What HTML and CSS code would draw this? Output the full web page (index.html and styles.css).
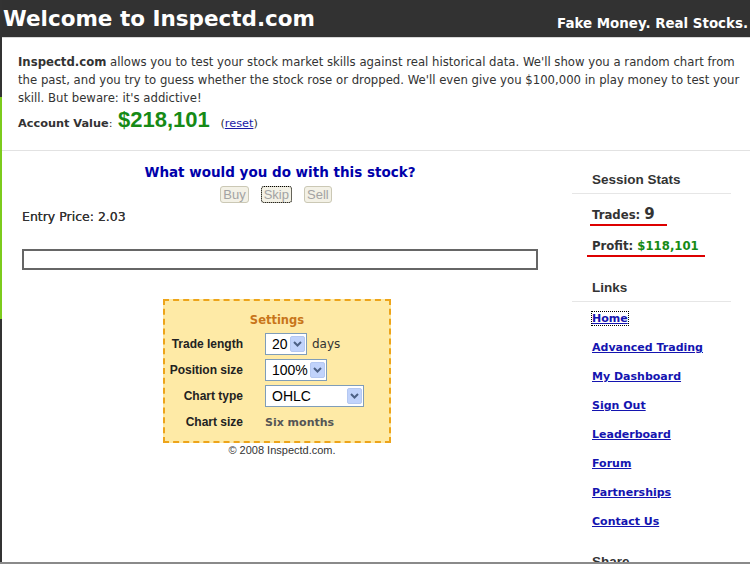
FILE: index.html
```html
<!DOCTYPE html>
<html>
<head>
<meta charset="utf-8">
<link rel="stylesheet" href="styles.css">
</head>
<body>
<div class="page">
  <div class="edge-green"></div>
  <header class="top">
    <h1 class="brand">Welcome to Inspectd.com</h1>
    <div class="tagline">Fake Money. Real Stocks.</div>
  </header>
  <section class="intro">
    <p class="blurb"><b>Inspectd.com</b> allows you to test your stock market skills against real historical data. We'll show you a random chart from the past, and you try to guess whether the stock rose or dropped. We'll even give you $100,000 in play money to test your skill. But beware: it's addictive!</p>
    <div class="account"><span class="acc-label">Account Value</span>: <span class="acc-value">$218,101</span> <span class="reset">(<a href="#">reset</a>)</span></div>
  </section>
  <div class="main">
    <div class="center">
      <h2 class="question">What would you do with this stock?</h2>
      <div class="actions">
        <button class="btn" disabled>Buy</button>
        <button class="btn focus" disabled>Skip</button>
        <button class="btn" disabled>Sell</button>
      </div>
      <div class="entry">Entry Price: 2.03</div>
      <div class="chartbar"></div>
      <div class="settings">
        <div class="settings-title">Settings</div>
        <div class="set-grid">
          <div class="lbl">Trade length</div>
          <div class="ctl"><span class="sel w20"><span class="val">20</span><span class="arr"><svg width="9" height="6" viewBox="0 0 9 6"><path d="M1 1 L4.5 4.5 L8 1" fill="none" stroke="#4d6185" stroke-width="2"/></svg></span></span><span class="unit">days</span></div>
          <div class="lbl">Position size</div>
          <div class="ctl"><span class="sel w100"><span class="val">100%</span><span class="arr"><svg width="9" height="6" viewBox="0 0 9 6"><path d="M1 1 L4.5 4.5 L8 1" fill="none" stroke="#4d6185" stroke-width="2"/></svg></span></span></div>
          <div class="lbl">Chart type</div>
          <div class="ctl"><span class="sel wohlc"><span class="val">OHLC</span><span class="arr"><svg width="9" height="6" viewBox="0 0 9 6"><path d="M1 1 L4.5 4.5 L8 1" fill="none" stroke="#4d6185" stroke-width="2"/></svg></span></span></div>
          <div class="lbl">Chart size</div>
          <div class="ctl"><span class="fixed">Six months</span></div>
        </div>
      </div>
      <div class="copy">© 2008 Inspectd.com.</div>
    </div>
    <aside class="side">
      <h3 class="side-head">Session Stats</h3>
      <div class="stat trades">Trades: <span class="num">9</span></div>
      <div class="stat profit">Profit: <span class="green">$118,101</span></div>
      <h3 class="side-head links-head">Links</h3>
      <ul class="links">
        <li><a href="#" class="focus">Home</a></li>
        <li><a href="#">Advanced Trading</a></li>
        <li><a href="#">My Dashboard</a></li>
        <li><a href="#">Sign Out</a></li>
        <li><a href="#">Leaderboard</a></li>
        <li><a href="#">Forum</a></li>
        <li><a href="#">Partnerships</a></li>
        <li><a href="#">Contact Us</a></li>
      </ul>
      <h3 class="side-head share">Share</h3>
    </aside>
  </div>
</div>
</body>
</html>
```
FILE: styles.css
```css
html, body {
  margin: 0;
  padding: 0;
  background: #fff;
}
body {
  font-family: "DejaVu Sans", Verdana, sans-serif;
  color: #333;
}
.page {
  position: relative;
  width: 750px;
  height: 562px;
  overflow: hidden;
  border-bottom: 2px solid #8a8a8a;
  box-sizing: content-box;
}
.page::before {
  content: "";
  position: absolute;
  left: 0;
  top: 0;
  bottom: 0;
  width: 2px;
  background: #333;
}
.edge-green {
  position: absolute;
  left: 0;
  top: 97px;
  width: 2px;
  height: 222px;
  background: #7ccb1c;
}
.top {
  height: 37px;
  background: #323232;
  color: #fff;
  display: flex;
  justify-content: space-between;
  align-items: flex-end;
  border-bottom: 1px solid #d8d8d8;
}
.brand {
  margin: 0 0 4px 3px;
  font-size: 21.5px;
  font-weight: bold;
  line-height: 28px;
}
.tagline {
  font-size: 13.4px;
  font-weight: bold;
  margin: 0 2px 4px 0;
  line-height: 18px;
}
.intro {
  padding: 15px 8px 0 18px;
  height: 97px;
  border-bottom: 1px solid #e2e2e2;
}
.blurb {
  margin: 0;
  font-size: 11.7px;
  line-height: 18px;
}
.account {
  margin-top: 1px;
  font-size: 11.3px;
  line-height: 24px;
}
.acc-label {
  font-weight: bold;
}
.acc-value {
  font-family: "Liberation Sans", Arial, sans-serif;
  color: #168a16;
  font-weight: bold;
  font-size: 22px;
  margin-left: 2px;
  margin-right: 7px;
}
.reset a {
  color: #1a1aa6;
}
.main {
  display: flex;
}
.center {
  width: 516px;
  padding-left: 22px;
  margin-right: 34px;
}
.question {
  margin: 12px 0 0;
  text-align: center;
  font-size: 13.5px;
  color: #0000aa;
  line-height: 18px;
}
.actions {
  display: flex;
  justify-content: center;
  gap: 12px;
  margin-top: 5px;
  margin-left: -8px;
}
.btn {
  font-family: "Liberation Sans", Arial, sans-serif;
  font-size: 13px;
  color: #a3a3a3;
  background: #f3f1e6;
  border: 1px solid #cbc8b5;
  border-radius: 3px;
  padding: 0 2px;
  height: 17px;
  line-height: 15px;
}
.btn.focus {
  outline: 1px dotted #000;
  outline-offset: -1px;
}
.entry {
  margin-top: 6px;
  font-size: 12.5px;
  line-height: 16px;
  color: #333;
  text-shadow: 0 0 0.3px #333;
}
.chartbar {
  margin-top: 24px;
  height: 17px;
  border: 2px solid #666;
}
.settings {
  margin-top: 29px;
  width: 224px;
  height: 139px;
  background: #feeaa6;
  border: 2px dashed #eda41a;
  padding-top: 1px;
  margin-left: 141px;
}
.settings-title {
  text-align: center;
  color: #c8751a;
  font-weight: bold;
  font-size: 11.5px;
  margin-top: 10px;
  line-height: 16px;
}
.set-grid {
  display: grid;
  grid-template-columns: 78px auto;
  column-gap: 22px;
  row-gap: 4px;
  margin-top: 5px;
  align-items: center;
}
.lbl {
  text-align: right;
  font-family: "Liberation Sans", Arial, sans-serif;
  font-size: 12px;
  font-weight: bold;
  color: #222;
  white-space: nowrap;
}
.ctl {
  display: flex;
  align-items: center;
  height: 22px;
  font-size: 12px;
}
.sel {
  display: flex;
  align-items: center;
  height: 20px;
  border: 1px solid #7f9db9;
  background: #fff;
  box-sizing: border-box;
  padding: 1px;
  font-family: "Liberation Sans", Arial, sans-serif;
  font-size: 14px;
  color: #000;
}
.sel .val {
  flex: 1;
  padding-left: 5px;
}
.sel .arr {
  width: 15px;
  height: 16px;
  background: #c1d3fb;
  border: 1px solid #b5c8f1;
  box-sizing: border-box;
  border-radius: 2px;
  display: flex;
  align-items: center;
  justify-content: center;
}
.w20 { width: 42px; height: 22px; }
.w100 { width: 62px; height: 22px; }
.wohlc { width: 99px; height: 22px; }
.unit {
  margin-left: 5px;
  color: #333;
}
.fixed {
  font-weight: bold;
  color: #555;
  font-size: 11px;
}
.copy {
  text-align: center;
  font-family: "Liberation Sans", Arial, sans-serif;
  font-size: 11px;
  margin-top: 1px;
  margin-left: 2px;
  width: 516px;
}
.side {
  width: 159px;
}
.side-head {
  margin: 21px 0 0;
  padding: 0 0 5px 20px;
  font-family: "Liberation Sans", Arial, sans-serif;
  font-size: 13.5px;
  line-height: 16px;
  color: #333;
  border-bottom: 1px solid #e6e6e6;
}
.stat {
  margin-left: 20px;
  font-size: 11.7px;
  font-weight: bold;
  color: #333;
  line-height: 18px;
  display: inline-block;
}
.trades {
  margin-top: 11px;
  border-bottom: 2px solid #dd0000;
  padding-right: 12px;
  margin-left: 18px;
  padding-left: 2px;
}
.trades .num {
  font-size: 15px;
}
.profit {
  margin-top: 11px;
  margin-left: 15px;
  padding-left: 5px;
  border-bottom: 2px solid #dd0000;
  padding-right: 6px;
}
.green {
  color: #168a16;
}
.links-head {
  margin-top: 23px;
}
.links {
  list-style: none;
  margin: 10px 0 0;
  padding: 0 0 0 20px;
}
.links li {
  height: 29px;
  font-size: 11px;
  font-weight: bold;
}
.links a {
  color: #1414b0;
  text-decoration: underline;
}
.links a.focus {
  outline: 1px dotted #000;
}
.share {
  margin-top: 10px;
  border: none;
}
```
